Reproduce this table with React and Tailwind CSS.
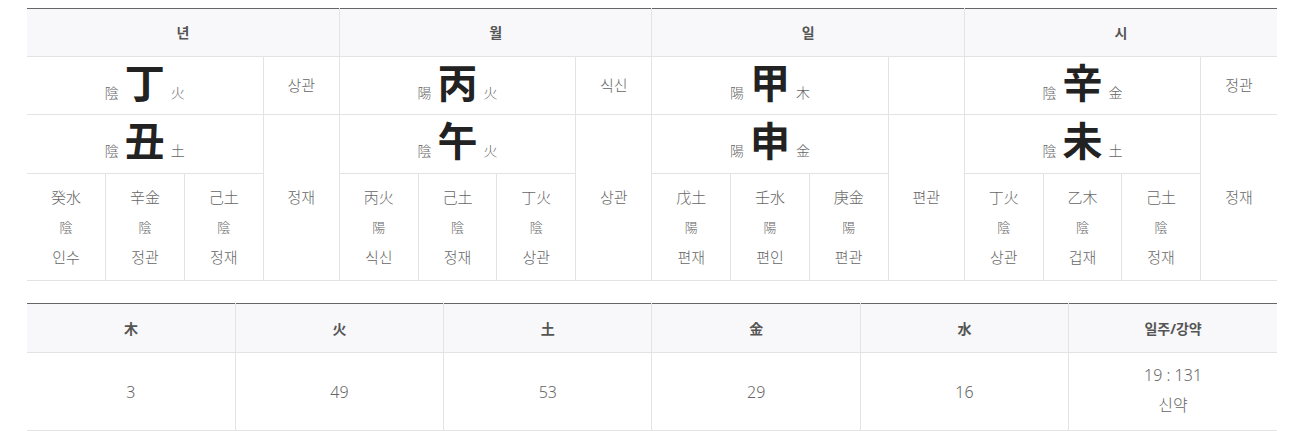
const pillars = [
  {
    title: "년",
    stem: { yy: "陰", ch: "丁", el: "火", god: "상관" },
    branch: { yy: "陰", ch: "丑", el: "土", god: "정재" },
    hidden: [
      ["癸水", "陰", "인수"],
      ["辛金", "陰", "정관"],
      ["己土", "陰", "정재"],
    ],
  },
  {
    title: "월",
    stem: { yy: "陽", ch: "丙", el: "火", god: "식신" },
    branch: { yy: "陰", ch: "午", el: "火", god: "상관" },
    hidden: [
      ["丙火", "陽", "식신"],
      ["己土", "陰", "정재"],
      ["丁火", "陰", "상관"],
    ],
  },
  {
    title: "일",
    stem: { yy: "陽", ch: "甲", el: "木", god: "" },
    branch: { yy: "陽", ch: "申", el: "金", god: "편관" },
    hidden: [
      ["戊土", "陽", "편재"],
      ["壬水", "陽", "편인"],
      ["庚金", "陽", "편관"],
    ],
  },
  {
    title: "시",
    stem: { yy: "陰", ch: "辛", el: "金", god: "정관" },
    branch: { yy: "陰", ch: "未", el: "土", god: "정재" },
    hidden: [
      ["丁火", "陰", "상관"],
      ["乙木", "陰", "겁재"],
      ["己土", "陰", "정재"],
    ],
  },
]

const elements = [
  { name: "木", value: "3" },
  { name: "火", value: "49" },
  { name: "土", value: "53" },
  { name: "金", value: "29" },
  { name: "水", value: "16" },
]

function Glyph({ item }) {
  return (
    <div className="flex items-baseline justify-center gap-[6px]">
      <span className="text-[14px] font-light text-[#666]">{item.yy}</span>
      <span className="text-[40px] leading-[44px] font-bold text-[#222]">{item.ch}</span>
      <span className="text-[14px] font-light text-[#666]">{item.el}</span>
    </div>
  )
}

export default function App() {
  const last = (i) => (i === pillars.length - 1 ? "" : "border-r")
  return (
    <div
      className="bg-white w-[1291px] h-[431px] px-[27px] pt-[8px] text-[#666] font-light"
      style={{ fontFamily: '"Noto Sans", "Noto Sans CJK KR", sans-serif' }}
    >
      <table className="w-[1250px] table-fixed border-collapse border-t border-[#666]">
        <colgroup>
          {pillars.map((p) => [
            <col key={p.title + "1"} className="w-[78.7px]" />,
            <col key={p.title + "2"} className="w-[78.7px]" />,
            <col key={p.title + "3"} className="w-[78.7px]" />,
            <col key={p.title + "4"} className="w-[76.4px]" />,
          ])}
        </colgroup>
        <thead>
          <tr className="h-[48px] bg-[#f8f8fa]">
            {pillars.map((p, i) => (
              <th
                key={p.title}
                colSpan={4}
                className={`text-[14px] font-bold text-[#555] border-b border-[#e3e3e3] ${last(i)}`}
              >
                {p.title}
              </th>
            ))}
          </tr>
        </thead>
        <tbody>
          <tr className="h-[58px]">
            {pillars.map((p, i) => [
              <td key={p.title + "s"} colSpan={3} className="border-b border-r border-[#e3e3e3] pb-[6px]">
                <Glyph item={p.stem} />
              </td>,
              <td
                key={p.title + "sg"}
                className={`text-center text-[15px] border-b border-[#e3e3e3] ${last(i)}`}
              >
                {p.stem.god}
              </td>,
            ])}
          </tr>
          <tr className="h-[59px]">
            {pillars.map((p, i) => [
              <td key={p.title + "b"} colSpan={3} className="border-b border-r border-[#e3e3e3] pb-[6px]">
                <Glyph item={p.branch} />
              </td>,
              <td
                key={p.title + "bg"}
                rowSpan={2}
                className={`text-center text-[15px] border-b border-[#e3e3e3] ${last(i)}`}
              >
                {p.branch.god}
              </td>,
            ])}
          </tr>
          <tr className="h-[107px]">
            {pillars.map((p) =>
              p.hidden.map((h, j) => (
                <td
                  key={p.title + j}
                  className="text-center text-[15px] leading-[30px] border-b border-r border-[#e3e3e3]"
                >
                  {h.map((t, k) => (
                    <div key={k} className={k === 1 ? "text-[13px]" : ""}>
                      {t}
                    </div>
                  ))}
                </td>
              ))
            )}
          </tr>
        </tbody>
      </table>

      <table className="mt-[22px] w-[1250px] table-fixed border-collapse border-t border-[#666]">
        <thead>
          <tr className="h-[49px] bg-[#f8f8fa]">
            {elements.map((e) => (
              <th key={e.name} className="text-[14px] font-bold text-[#555] border-b border-r border-[#e3e3e3]">
                {e.name}
              </th>
            ))}
            <th className="text-[14px] font-bold text-[#555] border-b border-[#e3e3e3]">일주/강약</th>
          </tr>
        </thead>
        <tbody>
          <tr className="h-[78px]">
            {elements.map((e) => (
              <td key={e.name} className="text-center text-[16px] border-b border-r border-[#e3e3e3]">
                {e.value}
              </td>
            ))}
            <td className="text-center text-[16px] leading-[30px] border-b border-[#e3e3e3] pb-[3px]">
              <div>19 : 131</div>
              <div>신약</div>
            </td>
          </tr>
        </tbody>
      </table>
    </div>
  )
}
